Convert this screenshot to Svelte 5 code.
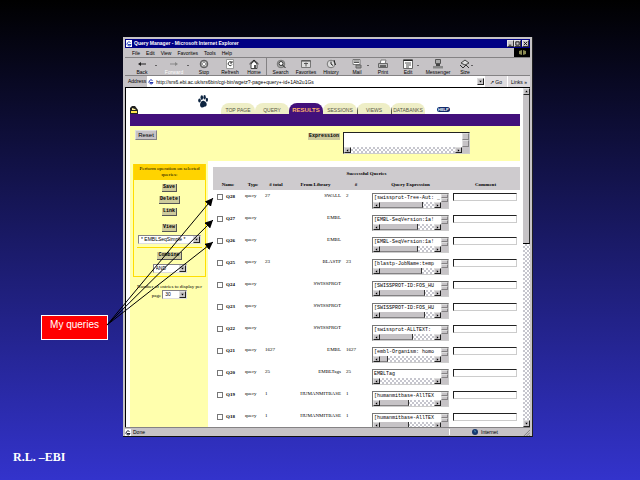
<script>
  const menus = ["File", "Edit", "View", "Favorites", "Tools", "Help"];

  const tools = [
    { label: "Back", icon: "back", more: true },
    { label: "Forward", icon: "forward", more: true, off: true },
    { label: "Stop", icon: "stop" },
    { label: "Refresh", icon: "refresh" },
    { label: "Home", icon: "home" },
    { label: "Search", icon: "search", line: true },
    { label: "Favorites", icon: "favorites" },
    { label: "History", icon: "history" },
    { label: "Mail", icon: "mail", more: true },
    { label: "Print", icon: "print" },
    { label: "Edit", icon: "edit", more: true },
    { label: "Messenger", icon: "messenger" },
    { label: "Size", icon: "size", more: true },
  ];

  const tabs = ["TOP PAGE", "QUERY", "RESULTS", "SESSIONS", "VIEWS", "DATABANKS"];

  let rows = $state([
    { name: "Q28", type: "query", total: "27", lib: "SWALL", n: "2", expr: "[swissprot-Tree-Aut: _", thumb: 43 },
    { name: "Q27", type: "query", total: "", lib: "EMBL", n: "", expr: "[EMBL-SeqVersion:1a!", thumb: 38 },
    { name: "Q26", type: "query", total: "", lib: "EMBL", n: "", expr: "[EMBL-SeqVersion:1a!", thumb: 38 },
    { name: "Q25", type: "query", total: "23", lib: "BLASTP", n: "23", expr: "[blastp-JobName:temp", thumb: 42 },
    { name: "Q24", type: "query", total: "", lib: "SWISSPROT", n: "", expr: "[SWISSPROT-ID:FOS_HU", thumb: 45 },
    { name: "Q23", type: "query", total: "", lib: "SWISSPROT", n: "", expr: "[SWISSPROT-ID:FOS_HU", thumb: 45 },
    { name: "Q22", type: "query", total: "", lib: "SWISSPROT", n: "", expr: "[swissprot-ALLTEXT:", thumb: 33 },
    { name: "Q21", type: "query", total: "1627", lib: "EMBL", n: "1627", expr: "[embl-Organism: homo", thumb: 8 },
    { name: "Q20", type: "query", total: "25", lib: "EMBLTags", n: "25", expr: "EMBLTag", thumb: 0 },
    { name: "Q19", type: "query", total: "1", lib: "HUMANMITBASE", n: "1", expr: "[humanmitbase-AllTEX", thumb: 29 },
    { name: "Q18", type: "query", total: "1", lib: "HUMANMITBASE", n: "1", expr: "[humanmitbase-AllTEX", thumb: 29 },
  ]);
</script>

{#snippet arrow(dir)}
  <svg class="arrow {dir}" viewBox="0 0 6 6" aria-hidden="true"><path d="M1.5 2.2h3L3 4.2z" /></svg>
{/snippet}

{#snippet toolIcon(name)}
  <svg class="tool-icon" viewBox="0 0 12 10" aria-hidden="true">
    {#if name === "back"}
      <path d="M2 5l3-2v1.5h5v1H5V7z" fill="#222" />
    {:else if name === "forward"}
      <path d="M10 5L7 3v1.5H2v1h5V7z" fill="#888" />
    {:else if name === "stop"}
      <circle cx="6" cy="5" r="3.8" fill="#999" stroke="#555" /><path d="M4.4 3.4l3.2 3.2m0-3.2L4.4 6.6" stroke="#fff" />
    {:else if name === "refresh"}
      <path d="M2.5.5h7v9h-7z" fill="#fff" stroke="#999" /><path d="M7.5 3.2A2 2 0 1 0 8 5.5M8 2v2H6" fill="none" stroke="#333" />
    {:else if name === "home"}
      <path d="M1.5 5L6 1l4.5 4" fill="none" stroke="#222" /><path d="M3 5l3-2.8L9 5v4.5H3z" fill="#fff" stroke="#444" /><path d="M6 6h2v3H6z" fill="#555" />
    {:else if name === "search"}
      <circle cx="6" cy="5" r="3.8" fill="#aaa" stroke="#777" /><circle cx="6" cy="4.5" r="2" fill="#fff" stroke="#333" /><path d="M7.5 6l3 3" stroke="#222" />
    {:else if name === "favorites"}
      <path d="M1.5 1.5h9v7h-9z" fill="#ddd" stroke="#777" /><path d="M1.5 2h9" stroke="#444" /><path d="M6 3.5v4M4 4.5h4" stroke="#555" />
    {:else if name === "history"}
      <circle cx="6" cy="5" r="3.8" fill="#ddd" stroke="#777" /><path d="M6 2.5V5l2 1.5M9 1l1.5 5" fill="none" stroke="#222" />
    {:else if name === "mail"}
      <path d="M2 .5h7v5H2z" fill="#fff" stroke="#777" /><path d="M3 2h5M3 3.5h5" stroke="#555" /><path d="M5 6h5v3H5z" fill="#999" stroke="#666" />
    {:else if name === "print"}
      <path d="M4 1h5l-1 4H3z" fill="#fff" stroke="#777" /><path d="M1.5 4.5h9v4h-9z" fill="#bbb" stroke="#666" /><path d="M3 7h6" stroke="#111" />
    {:else if name === "edit"}
      <path d="M1.5.5h9v9h-9z" fill="#fff" stroke="#666" /><path d="M1.5 1.5h9" stroke="#222" /><path d="M3 4h6M4 6h5M4 8h3" stroke="#555" />
    {:else if name === "messenger"}
      <path d="M3.5.5h5v4h-5z" fill="#aaa" stroke="#555" /><path d="M1 7h10v2.5H1z" fill="#888" /><path d="M4 5h4v2H4z" fill="#444" />
    {:else}
      <path d="M2 4l4-3 4 3-4 2z" fill="#ddd" stroke="#444" /><path d="M1 6l3 3 3-3 3 3" fill="none" stroke="#333" />
    {/if}
  </svg>
{/snippet}

{#snippet hbar(thumb)}
  <div class="hbar" aria-hidden="true">
    <span class="nub">{@render arrow("to-left")}</span>
    <span class="track">
      {#if thumb}<span class="thumb" style="width: {thumb}px"></span>{/if}
    </span>
    <span class="nub">{@render arrow("to-right")}</span>
    <span class="corner"></span>
  </div>
{/snippet}

<div class="slide">
  <div class="window">
    <header class="titlebar">
      <svg class="page-icon" viewBox="0 0 6 7" aria-hidden="true"><path d="M0 0h6v7H0z" fill="#fff" /><path d="M4.5 2.5A2 2 0 1 0 5 4.5H2" fill="none" stroke="#2244bb" /></svg>
      <h1>Query Manager - Microsoft Internet Explorer</h1>
      <button class="ctl" aria-label="Minimize"><svg viewBox="0 0 6 6"><path d="M1 5h3" /></svg></button>
      <button class="ctl" aria-label="Maximize"><svg viewBox="0 0 6 6"><path d="M1 1h4v4H1z" /></svg></button>
      <button class="ctl" aria-label="Close"><svg viewBox="0 0 6 6"><path d="M1 1l4 4m0-4L1 5" /></svg></button>
    </header>

    <nav class="menubar">
      {#each menus as m}
        <button class="menu">{m}</button>
      {/each}
      <svg class="brand" viewBox="0 0 16 9" aria-hidden="true"><path d="M0 0h16v9H0z" /><path d="M5 3l3-1v5l-3-1zM9 2l3 1v3l-3 1z" fill="#8a8a52" /></svg>
    </nav>

    <div class="toolbar">
      {#each tools as t}
        <button class="tool" class:off={t.off} class:line={t.line}>
          {@render toolIcon(t.icon)}
          {t.label}
          {#if t.more}<i class="more"></i>{/if}
        </button>
      {/each}
    </div>

    <div class="address">
      <label for="url">Address</label>
      <svg class="page-icon" viewBox="0 0 6 7" aria-hidden="true"><path d="M0 0h6v7H0z" fill="#fff" /><path d="M4.5 2.5A2 2 0 1 0 5 4.5H2" fill="none" stroke="#2233aa" /></svg>
      <input id="url" value="http://srs6.ebi.ac.uk/srs6bin/cgi-bin/wgetz?-page+query+-id+1Ab2u1Gs" />
      <span class="nub">{@render arrow("down")}</span>
      <button class="go">&#8599; Go</button>
      <button class="go">Links &raquo;</button>
    </div>

    <div class="viewport">
      <div class="page">
        <div class="masthead">
          <svg class="lock" viewBox="0 0 8 8" aria-hidden="true"><path d="M0 2l2-2h3l3 4v4H0z" fill="#222" /><path d="M1 5h6v2H1z" fill="#ffe34d" /><path d="M2 2l3 1 1 1H2z" fill="#fff3a0" /></svg>
          <svg class="paw" viewBox="0 0 10 13" fill="#0d2440" aria-label="SRS" role="img">
            <ellipse cx="1.5" cy="5.5" rx="1.3" ry="2" />
            <ellipse cx="3.8" cy="2.6" rx="1.3" ry="2.3" />
            <ellipse cx="6.6" cy="2.3" rx="1.2" ry="2.2" />
            <ellipse cx="8.9" cy="4.8" rx="1.1" ry="2" />
            <path d="M5 5.8c2 0 4.3 2.2 3.6 4.4-.5 1.6-1.4.9-2.3 1.6-1.3 1-3.4 1-4-.6C1.6 9 3 5.8 5 5.8z" />
          </svg>
          <nav class="tabs">
            {#each tabs as t}
              <a href="#top" class:active={t === "RESULTS"}>{t}</a>
            {/each}
          </nav>
          <a class="help" href="#help">HELP</a>
        </div>
        <div class="band"></div>

        <div class="query-bar">
          <button class="reset">Reset</button>
          <label for="expression">Expression</label>
          <div class="box big">
            <div class="box-row">
              <textarea id="expression"></textarea>
              <div class="vbar"><span class="nub"></span><span class="nub"></span></div>
            </div>
            {@render hbar(0)}
          </div>
        </div>

        <div class="columns">
          <aside>
            <div class="panel">
              <p class="panel-head">Perform operation on selected queries:</p>
              <div class="actions">
                <button>Save</button>
                <button>Delete</button>
                <button>Link</button>
              </div>
              <div class="actions view">
                <button>View</button>
                <div class="select wide">
                  <select aria-label="View"><option>* EMBLSeqSimple *</option></select>
                  <span class="nub">{@render arrow("down")}</span>
                </div>
              </div>
              <div class="actions combine">
                <button>Combine</button>
                <div class="select mid">
                  <select aria-label="Combine with"><option>AND</option></select>
                  <span class="nub">{@render arrow("down")}</span>
                </div>
              </div>
            </div>
            <label class="per-page" for="count">Number of entries to display per</label>
            <div class="count">
              <span>page</span>
              <div class="select small">
                <select id="count"><option>30</option></select>
                <span class="nub">{@render arrow("down")}</span>
              </div>
            </div>
          </aside>

          <table>
            <colgroup>
              <col class="c-name" /><col class="c-type" /><col class="c-total" /><col class="c-lib" />
              <col class="c-n" /><col class="c-expr" /><col />
            </colgroup>
            <thead>
              <tr class="caption"><th colspan="7">Successful Queries</th></tr>
              <tr>
                <th>Name</th><th>Type</th><th># total</th><th>From Library</th>
                <th>#</th><th>Query Expression</th><th>Comment</th>
              </tr>
            </thead>
            <tbody>
              {#each rows as r}
                <tr>
                  <td><label class="pick"><input type="checkbox" /> {r.name}</label></td>
                  <td>{r.type}</td>
                  <td>{r.total}</td>
                  <td class="lib">{r.lib}</td>
                  <td class="n">{r.n}</td>
                  <td>
                    <div class="box">
                      <div class="box-row">
                        <textarea aria-label="Expression of {r.name}" bind:value={r.expr}></textarea>
                        <div class="vbar"><span class="nub"></span><span class="nub"></span></div>
                      </div>
                      {@render hbar(r.thumb)}
                    </div>
                  </td>
                  <td><input class="comment" aria-label="Comment on {r.name}" /></td>
                </tr>
              {/each}
            </tbody>
          </table>
        </div>
      </div>

      <div class="scroll" aria-hidden="true">
        <span class="nub">{@render arrow("to-top")}</span>
        <span class="thumb"></span>
        <span class="rest"></span>
        <span class="nub">{@render arrow("down")}</span>
      </div>
    </div>

    <footer class="status">
      <svg class="page-icon" viewBox="0 0 6 7" aria-hidden="true"><path d="M0 0h6v7H0z" fill="#fff" /><path d="M4.5 2.5A2 2 0 1 0 5 4.5H2" fill="none" stroke="#223" /></svg>
      <span class="done">Done</span>
      <span class="zone">
        <svg viewBox="0 0 6 6" aria-hidden="true"><circle cx="3" cy="3" r="3" fill="#16386e" /><path d="M2 1l2 1-1 2z" fill="#4a90b8" /></svg>
        Internet
      </span>
      <svg class="grip" viewBox="0 0 8 8" aria-hidden="true"><path d="M1 8l7-7M4 8l4-4M7 8l1-1" stroke="#777" /></svg>
    </footer>
  </div>

  <div class="callout">My queries</div>
  <svg class="pointers" viewBox="0 0 120 140" aria-hidden="true">
    <defs>
      <marker id="head" viewBox="0 0 8 8" refX="8" refY="4" markerWidth="8" markerHeight="8" markerUnits="userSpaceOnUse" orient="auto">
        <path d="M0 0l8 4-8 4z" />
      </marker>
    </defs>
    <path d="M7 135L113 8" marker-end="url(#head)" />
    <path d="M7 135L113 30" marker-end="url(#head)" />
    <path d="M7 135L113 52" marker-end="url(#head)" />
  </svg>

  <p class="credit">R.L. –EBI</p>
</div>

<style>
  :global(body) {
    margin: 0;
  }

  .slide {
    position: relative;
    box-sizing: border-box;
    display: flex;
    height: 100vh;
    padding: 37px 107px 43px 123px;
    overflow: hidden;
    background: linear-gradient(#000, #3333cc);
    font: 5px/6px "Liberation Sans", Arial, sans-serif;
    color: #000;
  }

  .slide :is(button, input, textarea, select) {
    box-sizing: border-box;
    margin: 0;
    padding: 0;
    border: 0;
    border-radius: 0;
    background: none;
    font: inherit;
    color: inherit;
    appearance: none;
    outline: none;
  }

  h1,
  p {
    margin: 0;
  }

  a {
    color: inherit;
    text-decoration: none;
  }

  .window {
    flex: 1;
    min-width: 0;
    display: flex;
    flex-direction: column;
    box-sizing: border-box;
    padding: 2px 2px 0;
    background: #c6c3c6;
    border-right: 1px solid #222;
    border-bottom: 1px solid #111;
  }

  .titlebar {
    display: flex;
    align-items: center;
    height: 9px;
    padding: 0 1px;
    background: #000084;
    color: #fff;
  }

  .page-icon {
    flex: none;
    width: 6px;
    height: 7px;
  }

  h1 {
    flex: 1;
    margin-left: 2px;
    font-size: 5px;
    line-height: 9px;
    white-space: nowrap;
  }

  .slide .ctl {
    width: 7px;
    height: 7px;
    background: #c6c3c6;
    border: 1px solid #e8e8e8;
    border-right-color: #333;
    border-bottom-color: #333;
  }

  .slide .ctl:last-child {
    margin-left: 1px;
  }

  .ctl svg {
    display: block;
    fill: none;
    stroke: #000;
  }

  .menubar {
    display: flex;
    align-items: center;
    gap: 6px;
    height: 10px;
    padding-left: 7px;
    border-bottom: 1px solid #848284;
    box-sizing: border-box;
  }

  .brand {
    width: 16px;
    height: 9px;
    margin-left: auto;
  }

  .toolbar {
    display: grid;
    grid-template-columns: 32px 32px 28px 24px 24px 28px 24px 26px 26px 26px 24px 36px 18px;
    height: 18px;
    padding-left: 1px;
    border-bottom: 1px solid #848284;
    box-sizing: border-box;
  }

  .tool {
    position: relative;
    display: flex;
    flex-direction: column;
    align-items: center;
  }

  .slide .tool.off {
    color: #fff;
  }

  .slide .tool.line {
    border-left: 1px solid #848284;
  }

  .tool-icon {
    width: 12px;
    height: 10px;
    margin-top: 1px;
  }

  .more {
    position: absolute;
    right: 1px;
    top: 7px;
    border: 1px solid transparent;
    border-top-color: #000;
  }

  .address {
    display: flex;
    align-items: center;
    height: 11px;
    background: #fff;
  }

  .address label {
    padding: 2px 1px 3px 3px;
    margin-right: 1px;
    background: #c6c3c6;
  }

  .address input {
    flex: 1;
    min-width: 0;
    padding-left: 2px;
  }

  .slide .go {
    height: 11px;
    width: 22px;
    margin-left: 1px;
    background: #dedbde;
  }

  .nub {
    box-sizing: border-box;
    flex: none;
    display: block;
    width: 7px;
    height: 7px;
    background: #c6c3c6;
    border: 1px solid #dedede;
    border-right-color: #222;
    border-bottom-color: #222;
  }

  .arrow {
    display: block;
    width: 5px;
    height: 5px;
  }

  .to-left {
    transform: rotate(90deg);
  }

  .to-right {
    transform: rotate(-90deg);
  }

  .to-top {
    transform: rotate(180deg);
  }

  .viewport {
    flex: 1;
    min-height: 0;
    display: flex;
    overflow: hidden;
    border-top: 1px solid #000;
    border-left: 1px solid #000;
    background: #fff;
  }

  .page {
    flex: 1;
    min-width: 0;
    display: flex;
    flex-direction: column;
    padding: 0 3px 0 4px;
  }

  .masthead {
    flex: none;
    display: flex;
    align-items: flex-end;
    height: 26px;
  }

  .lock {
    width: 8px;
    height: 8px;
  }

  .paw {
    width: 10px;
    height: 13px;
    margin: 0 13px 6px 60px;
  }

  .tabs {
    display: grid;
    grid-template-columns: repeat(6, 34px);
  }

  .tabs a {
    height: 11px;
    box-sizing: border-box;
    padding-top: 4px;
    border-radius: 8px 8px 0 0;
    background: linear-gradient(#555544, #555544) left bottom / 1px 7px no-repeat #eeeec6;
    color: #555544;
    text-align: center;
  }

  /* only the tabs right of SESSIONS keep the divider */
  .tabs a:nth-child(-n + 4) {
    background: #eeeec6;
  }

  .tabs a.active {
    background: #42107b;
    color: #ffb56b;
    font-size: 6px;
    font-weight: bold;
  }

  .help {
    margin: 0 0 2px 12px;
    padding: 0 1px;
    line-height: 5px;
    border-radius: 3px;
    background: #102a6b;
    color: #fff;
    font-weight: bold;
    font-size: 4px;
  }

  .band {
    flex: none;
    height: 12px;
    background: #42107b;
  }

  .query-bar {
    flex: none;
    display: flex;
    align-items: flex-start;
    box-sizing: border-box;
    height: 35px;
    padding: 4px 50px 0 5px;
    background: #ffffad;
  }

  .slide .reset {
    width: 22px;
    height: 10px;
    background: #c6c3c6;
    border: 1px solid #dedede;
    border-right-color: #848284;
    border-bottom-color: #848284;
    font-size: 6px;
    line-height: 8px;
  }

  .query-bar label {
    margin: 3px 3px 0 auto;
    padding: 0 1px;
    background: #cecb9c;
    font: bold 5px/7px "Liberation Mono", "Courier New", monospace;
  }

  .box {
    box-sizing: border-box;
    width: 77px;
    border: 1px solid #777;
    border-right-color: #ccc;
    border-bottom-color: #ccc;
    background: #fff;
  }

  .box.big {
    width: 127px;
    margin-top: 2px;
    border-color: #222 #ccc #ccc #222;
  }

  .box-row {
    display: flex;
  }

  .box textarea {
    flex: 1;
    min-width: 0;
    height: 8px;
    padding-left: 1px;
    resize: none;
    overflow: hidden;
    white-space: nowrap;
    font: 5px/8px "Liberation Mono", "Courier New", monospace;
  }

  .big textarea {
    height: 14px;
  }

  .vbar {
    display: flex;
    flex-direction: column;
    width: 7px;
  }

  .vbar .nub {
    flex: 1;
    height: auto;
    border-right-color: #848284;
    border-bottom-color: #848284;
  }

  .hbar {
    display: flex;
    height: 6px;
  }

  .hbar .nub {
    height: 6px;
  }

  .track,
  .rest {
    flex: 1;
    background: repeating-conic-gradient(#c6c6ce 0 25%, #fff 0 50%) 0 0 / 4px 4px;
  }

  .thumb {
    display: block;
    box-sizing: border-box;
    height: 6px;
    background: #c6c3c6;
    border-right: 1px solid #333;
    border-bottom: 1px solid #848284;
  }

  .corner {
    width: 7px;
    background: #c6c3c6;
  }

  .columns {
    flex: 1;
    min-height: 0;
    display: flex;
    align-items: flex-start;
  }

  aside {
    align-self: stretch;
    flex: none;
    box-sizing: border-box;
    width: 78px;
    padding: 3px 2px 0 3px;
    background: #ffffad;
    font-family: "Liberation Serif", "Times New Roman", serif;
    text-align: center;
  }

  .panel {
    border: 1px solid #ffde00;
    border-top: 0;
  }

  .panel-head {
    padding: 2px 4px;
    background: #ffd300;
  }

  .actions {
    display: flex;
    flex-direction: column;
    align-items: center;
    gap: 4px;
    padding-top: 4px;
  }

  .slide .actions button {
    height: 8px;
    padding: 0 1px;
    background: #cecb9c;
    border-right: 1px solid #555;
    border-bottom: 1px solid #555;
    font: bold 5px/7px "Liberation Mono", "Courier New", monospace;
  }

  .actions.view {
    gap: 3px;
    margin: 4px 3px 0;
    padding-bottom: 3px;
    border-bottom: 1px solid #ffde00;
  }

  .actions.combine {
    padding-bottom: 3px;
  }

  .select {
    display: flex;
    box-sizing: border-box;
    height: 9px;
    border: 1px solid #848284;
    border-right-color: #dedede;
    border-bottom-color: #dedede;
    background: #fff;
  }

  .select select {
    flex: 1;
    min-width: 0;
    padding-left: 2px;
    font: 5px/7px "Liberation Sans", Arial, sans-serif;
  }

  .wide {
    width: 63px;
  }

  .mid {
    width: 34px;
  }

  .small {
    width: 25px;
  }

  .per-page {
    display: block;
    margin-top: 7px;
    white-space: nowrap;
  }

  .count {
    display: flex;
    justify-content: center;
    align-items: flex-end;
    gap: 1px;
  }

  table {
    flex: 1;
    min-width: 0;
    margin: 6px 0 0 5px;
    border-collapse: collapse;
    table-layout: fixed;
    font: 5px/6px "Liberation Serif", "Times New Roman", serif;
  }

  .c-name {
    width: 30px;
  }

  .c-type {
    width: 20px;
  }

  .c-total {
    width: 26px;
  }

  .c-lib {
    width: 53px;
  }

  .c-n {
    width: 28px;
  }

  .c-expr {
    width: 81px;
  }

  thead {
    background: #cecbce;
  }

  th {
    height: 10px;
    padding: 0;
    vertical-align: middle;
  }

  .caption th {
    height: 13px;
  }

  td {
    height: 19px;
    padding: 3px 1px 0 2px;
    vertical-align: top;
  }

  td.lib {
    text-align: right;
  }

  td.n {
    padding-left: 4px;
  }

  .pick {
    display: flex;
    align-items: center;
    gap: 3px;
    padding: 1px 0 0 2px;
    font-weight: bold;
  }

  .slide .pick input {
    width: 6px;
    height: 6px;
    border: 1px solid #777;
    background: #fff;
  }

  .slide .pick input:checked {
    background: #000;
  }

  .slide .comment {
    display: block;
    width: 64px;
    height: 8px;
    border: 1px solid #ccc;
    border-top-color: #222;
    border-left-color: #222;
  }

  .scroll {
    display: flex;
    flex-direction: column;
    width: 7px;
  }

  .scroll .thumb {
    height: 149px;
    border-bottom-color: #000;
  }

  .status {
    display: flex;
    align-items: center;
    gap: 2px;
    height: 8px;
    border-top: 1px solid #848284;
  }

  .done {
    flex: 1;
  }

  .zone {
    display: flex;
    align-items: center;
    gap: 3px;
    box-sizing: border-box;
    width: 72px;
    padding-left: 22px;
    border-left: 1px solid #fff;
  }

  .zone svg {
    width: 6px;
    height: 6px;
  }

  .grip {
    width: 7px;
    height: 7px;
  }

  .callout {
    position: absolute;
    left: 41px;
    top: 315px;
    box-sizing: border-box;
    width: 67px;
    height: 25px;
    padding-top: 2px;
    border: 1px solid #fff;
    background: #ff0000;
    color: #fff;
    font-size: 10px;
    line-height: 13px;
    text-align: center;
  }

  .pointers {
    position: absolute;
    left: 100px;
    top: 190px;
    width: 120px;
    height: 140px;
    pointer-events: none;
  }

  .pointers > path {
    fill: none;
    stroke: #000;
  }

  .credit {
    position: absolute;
    left: 13px;
    bottom: 16px;
    color: #fff;
    font: bold 12px/14px "Liberation Serif", "Times New Roman", serif;
  }
</style>
